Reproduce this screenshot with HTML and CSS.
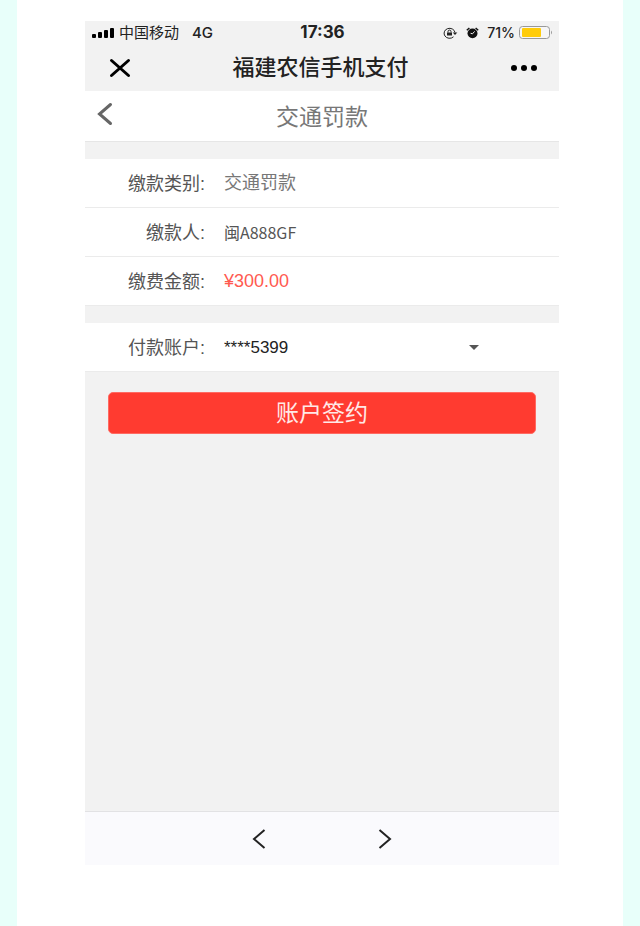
FILE: index.html
```html
<!DOCTYPE html>
<html lang="zh-CN">
<head>
  <meta charset="UTF-8">
  <meta name="viewport" content="width=device-width, initial-scale=1.0">
  <title>交通罚款</title>
  <link rel="stylesheet" href="styles.css">
</head>
<body>
  <div class="sheet">
    <div class="phone">
      <!-- Status bar -->
      <div class="status-bar">
        <div class="carrier">
          <svg width="22" height="12" viewBox="0 0 22 12">
            <rect x="0" y="7" width="4" height="4" rx="1"/>
            <rect x="6" y="5" width="4" height="6" rx="1"/>
            <rect x="12" y="3" width="4" height="8" rx="1"/>
            <rect x="18" y="1" width="4" height="10" rx="1"/>
          </svg>
          <span>中国移动</span>
          <span class="network">4G</span>
        </div>
        <div class="clock">17:36</div>
        <div class="indicators">
          <svg width="15" height="12" viewBox="0 0 15 12" fill="none" stroke="#222">
            <path d="M10.500 9.800A5.500 5 0 1 1 12 5.500"/>
            <path d="M9.700 5.500h4.600l-2.300 2.600z" fill="#222" stroke="none"/>
            <rect x="4" y="5.500" width="5" height="3" fill="#222" stroke="none"/>
            <path d="M5 5.500V4.600a1.500 1.500 0 0 1 3 0v.9"/>
          </svg>
          <svg class="alarm" width="13" height="12" viewBox="0 0 13 12">
            <ellipse cx="6.500" cy="6.400" rx="5" ry="4.800" fill="#111"/>
            <path d="M.8 3.200L3.400 1M12.200 3.200L9.600 1" stroke="#111" stroke-width="1.500" fill="none"/>
            <path d="M8.600 4.400L6.500 6.800 4.600 6.300" stroke="#f2f2f2" fill="none"/>
          </svg>
          <span>71%</span>
          <svg class="battery" width="34" height="13" viewBox="0 0 34 13">
            <rect x=".5" y=".5" width="30" height="12" rx="3" fill="#f6f6f6" stroke="#999"/>
            <rect x="3" y="2" width="19" height="9" rx="1" fill="#ffcc0a"/>
            <path d="M32 4.500q2 2 0 4z" fill="#999"/>
          </svg>
        </div>
      </div>

      <!-- Title bar -->
      <div class="title-bar">
        <button type="button" class="icon-btn" aria-label="关闭">
          <svg width="22" height="20" viewBox="0 0 22 20" fill="none" stroke="#000" stroke-width="3" stroke-linecap="round">
            <path d="M2.500 2.500l17 15M19.500 2.500l-17 15"/>
          </svg>
        </button>
        <h1>福建农信手机支付</h1>
        <button type="button" class="icon-btn" aria-label="更多">
          <svg width="28" height="8" viewBox="0 0 28 8">
            <circle cx="4" cy="4" r="3"/>
            <circle cx="14" cy="4" r="3"/>
            <circle cx="24" cy="4" r="3"/>
          </svg>
        </button>
      </div>

      <div class="page-header">
        <button type="button" class="icon-btn" aria-label="返回">
          <svg width="16" height="24" viewBox="0 0 16 24" fill="none" stroke="#666" stroke-width="3" stroke-linecap="round">
            <path d="M13.500 2.500L2.500 12l11 9.500"/>
          </svg>
        </button>
        <h2>交通罚款</h2>
      </div>

      <form class="content">
        <div class="group">
          <div class="row">
            <span class="label">缴款类别:</span>
            <span class="value">交通罚款</span>
          </div>
          <div class="row">
            <span class="label">缴款人:</span>
            <span class="value payer">闽A888GF</span>
          </div>
          <div class="row">
            <span class="label">缴费金额:</span>
            <span class="value amount">¥300.00</span>
          </div>
        </div>

        <div class="group">
          <div class="row">
            <label class="label" for="account">付款账户:</label>
            <div class="select-box">
              <select id="account">
                <option>****5399</option>
              </select>
              <svg class="arrow" width="10" height="5" viewBox="0 0 10 5">
                <path d="M0 0h10L5 5z" fill="#555"/>
              </svg>
            </div>
          </div>
        </div>

        <button type="button" class="sign-btn">账户签约</button>
      </form>

      <!-- Bottom toolbar -->
      <div class="toolbar">
        <button type="button" class="icon-btn" aria-label="后退">
          <svg width="14" height="20" viewBox="0 0 14 20" fill="none" stroke="#222" stroke-width="2">
            <path d="M12.500 1L2 10l10.500 9"/>
          </svg>
        </button>
        <button type="button" class="icon-btn" aria-label="前进">
          <svg width="14" height="20" viewBox="0 0 14 20" fill="none" stroke="#222" stroke-width="2">
            <path d="M1.500 1L12 10 1.500 19"/>
          </svg>
        </button>
      </div>
    </div>
  </div>
</body>
</html>
```
FILE: styles.css
```css
* {
  box-sizing: border-box;
}

body {
  margin: 0;
  background-color: #e8fffa;
  font-family: "Liberation Sans", "Noto Sans CJK SC", sans-serif;
  color: #555;
}

h1, h2 {
  margin: 0;
}

svg {
  display: block;
}

.sheet {
  display: flex;
  min-height: 100vh;
  margin: 0 17px;
  padding: 21px 64px 61px 68px;
  background: #fff;
}

.phone {
  flex: 1;
  display: flex;
  flex-direction: column;
  background: #f2f2f2;
}

.icon-btn {
  padding: 0;
  border: none;
  background: none;
  cursor: pointer;
}

/* Status bar */
.status-bar {
  display: grid;
  grid-template-columns: 1fr auto 1fr;
  align-items: center;
  height: 23px;
  padding: 0 6px 0 7px;
  font-size: 15px;
  line-height: 23px;
  color: #222;
}

.carrier, .indicators {
  display: flex;
  align-items: center;
}

.carrier {
  gap: 5px;
}

.network {
  margin-left: 8px;
}

.network, .clock, .indicators {
  font-family: Inter, sans-serif;
  font-weight: 500;
}

.clock {
  font-size: 17px;
  font-weight: bold;
}

.indicators {
  justify-content: flex-end;
  font-size: 14px;
}

.alarm {
  margin: 0 8px;
}

.battery {
  margin-left: 4px;
}

/* Title bar */
.title-bar {
  display: flex;
  align-items: center;
  justify-content: space-between;
  height: 47px;
  padding: 0 21px 0 24px;
}

.title-bar h1 {
  font-size: 22px;
  font-weight: 500;
  line-height: 30px;
  color: #222;
}

.page-header {
  display: grid;
  grid-template-columns: 40px 1fr 40px;
  align-items: center;
  height: 51px;
  padding: 2px 12px 0;
  background: #fff;
  border-bottom: 1px solid #e6e6e6;
}

.page-header .icon-btn {
  padding-bottom: 6px;
}

.page-header h2 {
  font-size: 23px;
  font-weight: 400;
  line-height: 30px;
  text-align: center;
  color: #777;
}

/* Payment details */
.content {
  flex: 1;
}

.group {
  margin-top: 17px;
  background: #fff;
}

.row {
  display: flex;
  align-items: center;
  gap: 19px;
  height: 49px;
  border-bottom: 1px solid #ebebeb;
  font-size: 18px;
  line-height: 24px;
}

.label {
  width: 120px;
  padding-top: 2px;
  text-align: right;
}

.value {
  color: #777;
}

.payer {
  font-family: "Noto Sans CJK SC", sans-serif;
  font-size: 16px;
  color: #555;
}

.amount {
  color: #ff5a50;
}

.select-box {
  position: relative;
  width: 255px;
}

.select-box select {
  width: 100%;
  padding: 0;
  border: none;
  background: none;
  appearance: none;
  font-family: inherit;
  font-size: 17px;
  line-height: 24px;
  color: #222;
}

.arrow {
  position: absolute;
  top: 10px;
  right: 0;
  pointer-events: none;
}

.sign-btn {
  display: block;
  width: calc(100% - 46px);
  height: 42px;
  margin: 20px auto;
  padding: 0;
  border: 1px solid #ff6a62;
  border-radius: 5px;
  background: #ff3b30;
  color: #ffe9e7;
  font-family: inherit;
  font-size: 23px;
  line-height: 30px;
  cursor: pointer;
}

/* Bottom toolbar */
.toolbar {
  display: flex;
  align-items: center;
  justify-content: center;
  gap: 112px;
  height: 54px;
  border-top: 1px solid #e2e2e4;
  background: #fafafd;
}
```
